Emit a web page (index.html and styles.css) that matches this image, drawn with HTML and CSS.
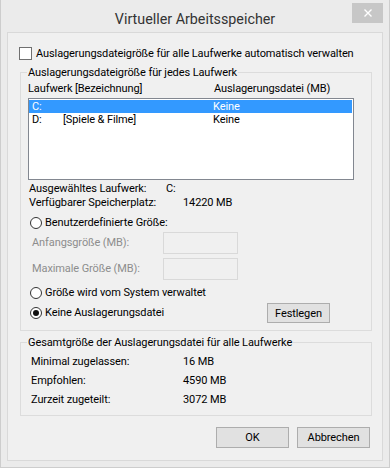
FILE: index.html
```html
<!DOCTYPE html>
<html lang="de">
<head>
    <meta charset="UTF-8">
    <title>Virtueller Arbeitsspeicher</title>
    <link rel="stylesheet" href="styles.css">
</head>
<body>
    <div class="window">
        <div class="titlebar">
            <div></div>
            <div class="title">Virtueller Arbeitsspeicher</div>
            <div class="close">
                <svg width="8" height="8" viewBox="0 0 8 8">
                    <path d="M0.5 0.5 L7.5 7.5 M7.5 0.5 L0.5 7.5" stroke="#fff" stroke-width="1.4" fill="none"/>
                </svg>
            </div>
        </div>

        <div class="content">
            <div class="auto">
                <span class="checkbox"></span>
                <span>Auslagerungsdateigröße für alle Laufwerke automatisch verwalten</span>
            </div>

            <fieldset class="group drives">
                <legend>Auslagerungsdateigröße für jedes Laufwerk</legend>
                <div class="list-head">
                    <span>Laufwerk [Bezeichnung]</span>
                    <span>Auslagerungsdatei (MB)</span>
                </div>
                <div class="list">
                    <div class="row selected"><span>C:</span><span></span><span>Keine</span></div>
                    <div class="row"><span>D:</span><span>[Spiele &amp; Filme]</span><span>Keine</span></div>
                </div>

                <div class="info-row first"><span class="drive-label">Ausgewähltes Laufwerk:</span><span>C:</span></div>
                <div class="info-row"><span class="space-label">Verfügbarer Speicherplatz:</span><span>14220 MB</span></div>

                <div class="option custom"><span class="radio"></span><span>Benutzerdefinierte Größe:</span></div>
                <div class="size-row first">
                    <span class="size-label">Anfangsgröße (MB):</span>
                    <span class="size-box"></span>
                </div>
                <div class="size-row">
                    <span class="size-label">Maximale Größe (MB):</span>
                    <span class="size-box"></span>
                </div>
                <div class="option system"><span class="radio"></span><span>Größe wird vom System verwaltet</span></div>
                <div class="option-line">
                    <div class="option"><span class="radio checked"></span><span>Keine Auslagerungsdatei</span></div>
                    <button class="set">Festlegen</button>
                </div>
            </fieldset>

            <fieldset class="group totals">
                <legend>Gesamtgröße der Auslagerungsdatei für alle Laufwerke</legend>
                <div class="totals-grid">
                    <span>Minimal zugelassen:</span><span>16 MB</span>
                    <span>Empfohlen:</span><span>4590 MB</span>
                    <span>Zurzeit zugeteilt:</span><span>3072 MB</span>
                </div>
            </fieldset>

            <div class="actions">
                <button>OK</button>
                <button>Abbrechen</button>
            </div>
        </div>
    </div>
</body>
</html>
```

FILE: styles.css
```css
body {
    margin: 0;
    background: #fff;
    font-family: Roboto, "Liberation Sans", sans-serif;
    font-size: 11px;
    letter-spacing: -0.1px;
    color: #000;
}
.window {
    width: 390px;
    height: 468px;
    box-sizing: border-box;
    background: #ebebeb;
    border: 1px solid #cdcdcd;
    border-top: none;
    display: flex;
    flex-direction: column;
}
.titlebar {
    height: 32px;
    flex-shrink: 0;
    display: grid;
    grid-template-columns: 1fr auto 1fr;
    align-items: start;
}
.title {
    font-size: 14.3px;
    letter-spacing: 0;
    line-height: 20px;
    padding-top: 9px;
    color: #333;
}
.close {
    justify-self: end;
    width: 31px;
    height: 20px;
    margin: 3px 6px 0 0;
    background: #c7c7c7;
    display: flex;
    align-items: center;
    justify-content: center;
}
.content {
    flex: 1;
    margin: 0 6px 6px 6px;
    background: #f0f0f0;
    border: 1px solid #d9d9d9;
}
.auto {
    display: flex;
    align-items: center;
    gap: 4px;
    height: 13px;
    line-height: 13px;
    margin: 14px 0 0 11px;
}
.checkbox {
    width: 11px;
    height: 11px;
    border: 1px solid #707070;
    background: #fff;
}
.group {
    margin: 5px 10px 0 12px;
    padding: 0 0 7px 7px;
    border: 1px solid #dcdcdc;
    min-width: 0;
}
.group legend {
    padding: 0 1px;
    margin-left: -1px;
    line-height: 15px;
}
.list-head {
    display: grid;
    grid-template-columns: 186px auto;
    line-height: 14px;
    margin-top: 2px;
}
.list {
    width: 326px;
    height: 82px;
    box-sizing: border-box;
    margin-top: 2px;
    padding-top: 1px;
    background: #fff;
    border: 1px solid #828790;
}
.row {
    display: grid;
    grid-template-columns: 31px 150px auto;
    height: 13px;
    line-height: 13px;
    padding-left: 3px;
    margin-right: 1px;
}
.row.selected {
    background: #3399ff;
    color: #fff;
}
.info-row {
    display: flex;
    line-height: 14px;
    margin-left: 1px;
}
.info-row.first {
    margin-top: 2px;
}
.drive-label {
    width: 137px;
}
.space-label {
    width: 154px;
}
.option {
    display: flex;
    align-items: center;
    gap: 3px;
    line-height: 14px;
    margin-left: 2px;
}
.option.custom {
    margin-top: 6px;
}
.option.system {
    margin-top: 6px;
}
.radio {
    width: 10px;
    height: 10px;
    border: 1px solid #333;
    border-radius: 50%;
    background: #fff;
    display: flex;
    align-items: center;
    justify-content: center;
}
.radio.checked::after {
    content: "";
    width: 6px;
    height: 6px;
    border-radius: 50%;
    background: #111;
}
.size-row {
    display: flex;
    align-items: center;
    padding-left: 4px;
    margin-top: 4px;
    color: #8d8d8d;
}
.size-row.first {
    margin-top: 2px;
}
.size-label {
    width: 131px;
    line-height: 14px;
}
.size-box {
    width: 75px;
    height: 22px;
    box-sizing: border-box;
    border: 1px solid #d9d9d9;
    background: #f0f0f0;
}
.option-line {
    display: flex;
    align-items: center;
    margin-top: 3px;
}
button {
    font-family: inherit;
    font-size: 11px;
    letter-spacing: -0.1px;
    color: #000;
    background: #e1e1e1;
    border: 1px solid #adadad;
    padding: 0;
}
.set {
    width: 63px;
    height: 20px;
    margin: 0 41px 0 auto;
}
.totals {
    margin-top: 4px;
    padding-bottom: 8px;
}
.totals-grid {
    display: grid;
    grid-template-columns: 152px auto;
    row-gap: 5px;
    line-height: 14px;
    margin: 5px 0 0 3px;
}
.actions {
    display: flex;
    justify-content: flex-end;
    gap: 8px;
    margin: 11px 12px 0 0;
}
.actions button {
    width: 73px;
    height: 21px;
}
```
